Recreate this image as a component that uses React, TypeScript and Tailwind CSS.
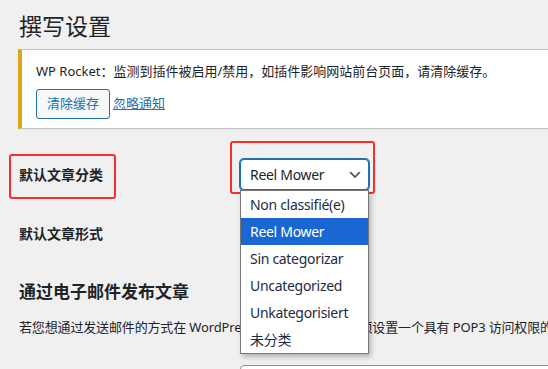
import React from "react";

const font = { fontFamily: '"Noto Sans", "Noto Sans CJK SC", sans-serif' };

const options = [
  "Non classifié(e)",
  "Reel Mower",
  "Sin categorizar",
  "Uncategorized",
  "Unkategorisiert",
  "未分类",
];

// chevron used by WP admin selects
function Chevron() {
  return (
    <svg width="16" height="16" viewBox="0 0 20 20" className="absolute right-[5px] top-1/2 -translate-y-1/2">
      <path d="M5 6l5 5 5-5 2 1-7 7-7-7 2-1z" fill="#555" />
    </svg>
  );
}

export default function App() {
  return (
    <div
      className="relative w-[548px] h-[369px] overflow-hidden bg-[#f0f0f1] text-[#1d2327]"
      style={font}
    >
      <div className="pl-[19px]">
        <h1 className="mt-[11px] text-[23px] leading-[30px] font-normal">撰写设置</h1>

        {/* WP Rocket notice */}
        <div className="-ml-px mt-[8px] w-[560px] bg-white border border-[#c3c4c7] border-l-4 border-l-[#dba617] shadow-[0_1px_1px_rgba(0,0,0,0.04)] pl-[14px] pt-[11px] pb-[9px]">
          <p className="text-[13px] leading-[20px]">WP Rocket：监测到插件被启用/禁用，如插件影响网站前台页面，请清除缓存。</p>
          <div className="mt-[8px] flex items-center gap-[3px]">
            <button className="h-[30px] px-[10px] rounded-[3px] border border-[#2271b1] bg-[#f6f7f7] text-[13px] text-[#2271b1]">
              清除缓存
            </button>
            <a className="text-[13px] text-[#2271b1] underline">忽略通知</a>
          </div>
        </div>

        {/* 默认文章分类 */}
        <div className="mt-[30px] flex items-center">
          <div className="w-[221px] text-[14px] font-bold">默认文章分类</div>
          <div className="relative z-20">
            <div className="relative w-[129px] h-[31px] rounded-[4px] border border-[#2271b1] ring-1 ring-[#2271b1] bg-white pl-[9px] text-[14px] leading-[29px] tracking-[-0.3px]">
              Reel Mower
              <Chevron />
            </div>
            <ul className="absolute left-0 top-full w-[129px] bg-white border border-[#767676] shadow-[2px_3px_5px_rgba(0,0,0,0.25)] text-[14px] tracking-[-0.3px] text-[#1d2b3f]">
              {options.map((o) => (
                <li
                  key={o}
                  className={
                    o === "Reel Mower"
                      ? "h-[27px] leading-[27px] pl-[9px] bg-[#1967d2] text-white"
                      : "h-[27px] leading-[27px] pl-[9px]"
                  }
                >
                  {o}
                </li>
              ))}
            </ul>
          </div>
        </div>

        {/* 默认文章形式 */}
        <div className="mt-[28px] flex items-center">
          <div className="w-[221px] text-[14px] font-bold">默认文章形式</div>
          <div className="w-[129px] h-[31px] rounded-[4px] border border-[#8c8f94] bg-white" />
        </div>

        <h2 className="mt-[31px] text-[17px] leading-[23px] font-bold">通过电子邮件发布文章</h2>
        <p className="mt-[14px] text-[13px] leading-[20px] whitespace-nowrap tracking-[-0.15px]">
          若您想通过发送邮件的方式在 WordPress 上发布文章，您必须设置一个具有 POP3 访问权限的秘密电子邮箱账户。
        </p>

        <div className="mt-[28px] ml-[221px] w-[400px] h-[30px] rounded-[4px] border border-[#8c8f94] bg-white" />
      </div>

      {/* red annotation boxes */}
      <div className="absolute left-[9px] top-[154px] w-[107px] h-[45px] rounded-[3px] border-2 border-[#fb2d2d] pointer-events-none" />
      <div className="absolute left-[230px] top-[141px] w-[145px] h-[53px] rounded-[3px] border-2 border-[#fb2d2d] z-10 pointer-events-none" />
    </div>
  );
}
